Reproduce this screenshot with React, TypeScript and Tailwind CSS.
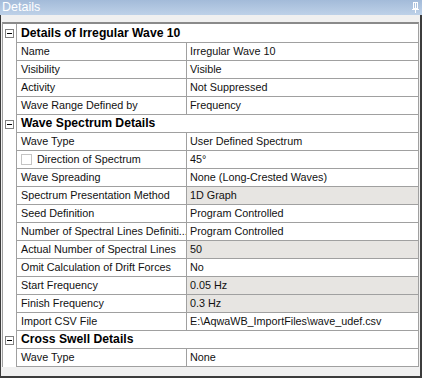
import React from "react";

type Row =
  | { kind: "cat"; text: string }
  | { kind: "prop"; label: string; value: string; gray?: boolean; check?: boolean };

const rows: Row[] = [
  { kind: "cat", text: "Details of Irregular Wave 10" },
  { kind: "prop", label: "Name", value: "Irregular Wave 10" },
  { kind: "prop", label: "Visibility", value: "Visible" },
  { kind: "prop", label: "Activity", value: "Not Suppressed" },
  { kind: "prop", label: "Wave Range Defined by", value: "Frequency" },
  { kind: "cat", text: "Wave Spectrum Details" },
  { kind: "prop", label: "Wave Type", value: "User Defined Spectrum" },
  { kind: "prop", label: "Direction of Spectrum", value: "45°", check: true },
  { kind: "prop", label: "Wave Spreading", value: "None (Long-Crested Waves)" },
  { kind: "prop", label: "Spectrum Presentation Method", value: "1D Graph", gray: true },
  { kind: "prop", label: "Seed Definition", value: "Program Controlled" },
  { kind: "prop", label: "Number of Spectral Lines Definiti...", value: "Program Controlled" },
  { kind: "prop", label: "Actual Number of Spectral Lines", value: "50", gray: true },
  { kind: "prop", label: "Omit Calculation of Drift Forces", value: "No" },
  { kind: "prop", label: "Start Frequency", value: "0.05 Hz", gray: true },
  { kind: "prop", label: "Finish Frequency", value: "0.3 Hz", gray: true },
  { kind: "prop", label: "Import CSV File", value: "E:\\AqwaWB_ImportFiles\\wave_udef.csv" },
  { kind: "cat", text: "Cross Swell Details" },
  { kind: "prop", label: "Wave Type", value: "None" },
];

function Minus() {
  return (
    <div className="w-[9px] h-[9px] border border-[#808080] bg-white flex items-center justify-center">
      <div className="w-[5px] h-px bg-black" />
    </div>
  );
}

export default function App() {
  return (
    <div className="w-[422px] h-[378px] flex flex-col bg-[#f0f0f0] font-['Liberation_Sans',Arial,sans-serif]">
      <div className="h-[15px] flex items-center justify-between bg-linear-to-b from-[#a3bbd9] to-[#bed1e8] pr-[3px]">
        <span className="pl-[2px] text-[12.5px] leading-none text-white">Details</span>
        <svg width="7" height="11" viewBox="0 0 7 11" className="block">
          <rect x="1.5" y="0.5" width="4" height="6" fill="none" stroke="#ffffff" />
          <rect x="3" y="1" width="1" height="5" fill="#ffffff" />
          <rect x="0" y="7" width="7" height="1" fill="#ffffff" />
          <rect x="3" y="8" width="1" height="3" fill="#ffffff" />
        </svg>
      </div>
      <div className="flex-1 border-l border-r-2 border-b-2 border-[#3c3c3c] pt-[7px] px-px">
        <div className="border-t-2 border-t-[#8a8a8a] border-l border-r border-l-[#a0a0a0] border-r-[#a0a0a0] bg-white flex flex-col">
          {rows.map((r, i) => {
            const h = i === 0 ? "h-[19px]" : "h-[18px]";
            if (r.kind === "cat") {
              return (
                <div key={i} className={`flex ${h}`}>
                  <div className="w-[13px] shrink-0 flex items-center pl-[2px]">
                    <Minus />
                  </div>
                  <div className="flex-1 border-l border-b border-[#a0a0a0] flex items-center pl-[4px] text-[12.2px] font-bold text-black leading-none">
                    {r.text}
                  </div>
                </div>
              );
            }
            return (
              <div key={i} className={`flex ${h}`}>
                <div className="w-[13px] shrink-0" />
                <div className="flex-1 flex border-l border-b border-[#a0a0a0] text-[10.8px] leading-none text-[#111]">
                  <div className="w-[170px] shrink-0 border-r border-[#a0a0a0] flex items-center pl-[4px] whitespace-nowrap overflow-hidden">
                    {r.check ? (
                      <>
                        <div className="w-[11px] h-[11px] border border-[#c4c4c4] bg-white mr-[5px] shrink-0" />
                        <span>{r.label}</span>
                      </>
                    ) : (
                      r.label
                    )}
                  </div>
                  <div
                    className={`flex-1 flex items-center pl-[3px] whitespace-nowrap overflow-hidden ${
                      r.gray ? "bg-[#e7e5e2]" : "bg-white"
                    }`}
                  >
                    {r.value}
                  </div>
                </div>
              </div>
            );
          })}
        </div>
      </div>
    </div>
  );
}
